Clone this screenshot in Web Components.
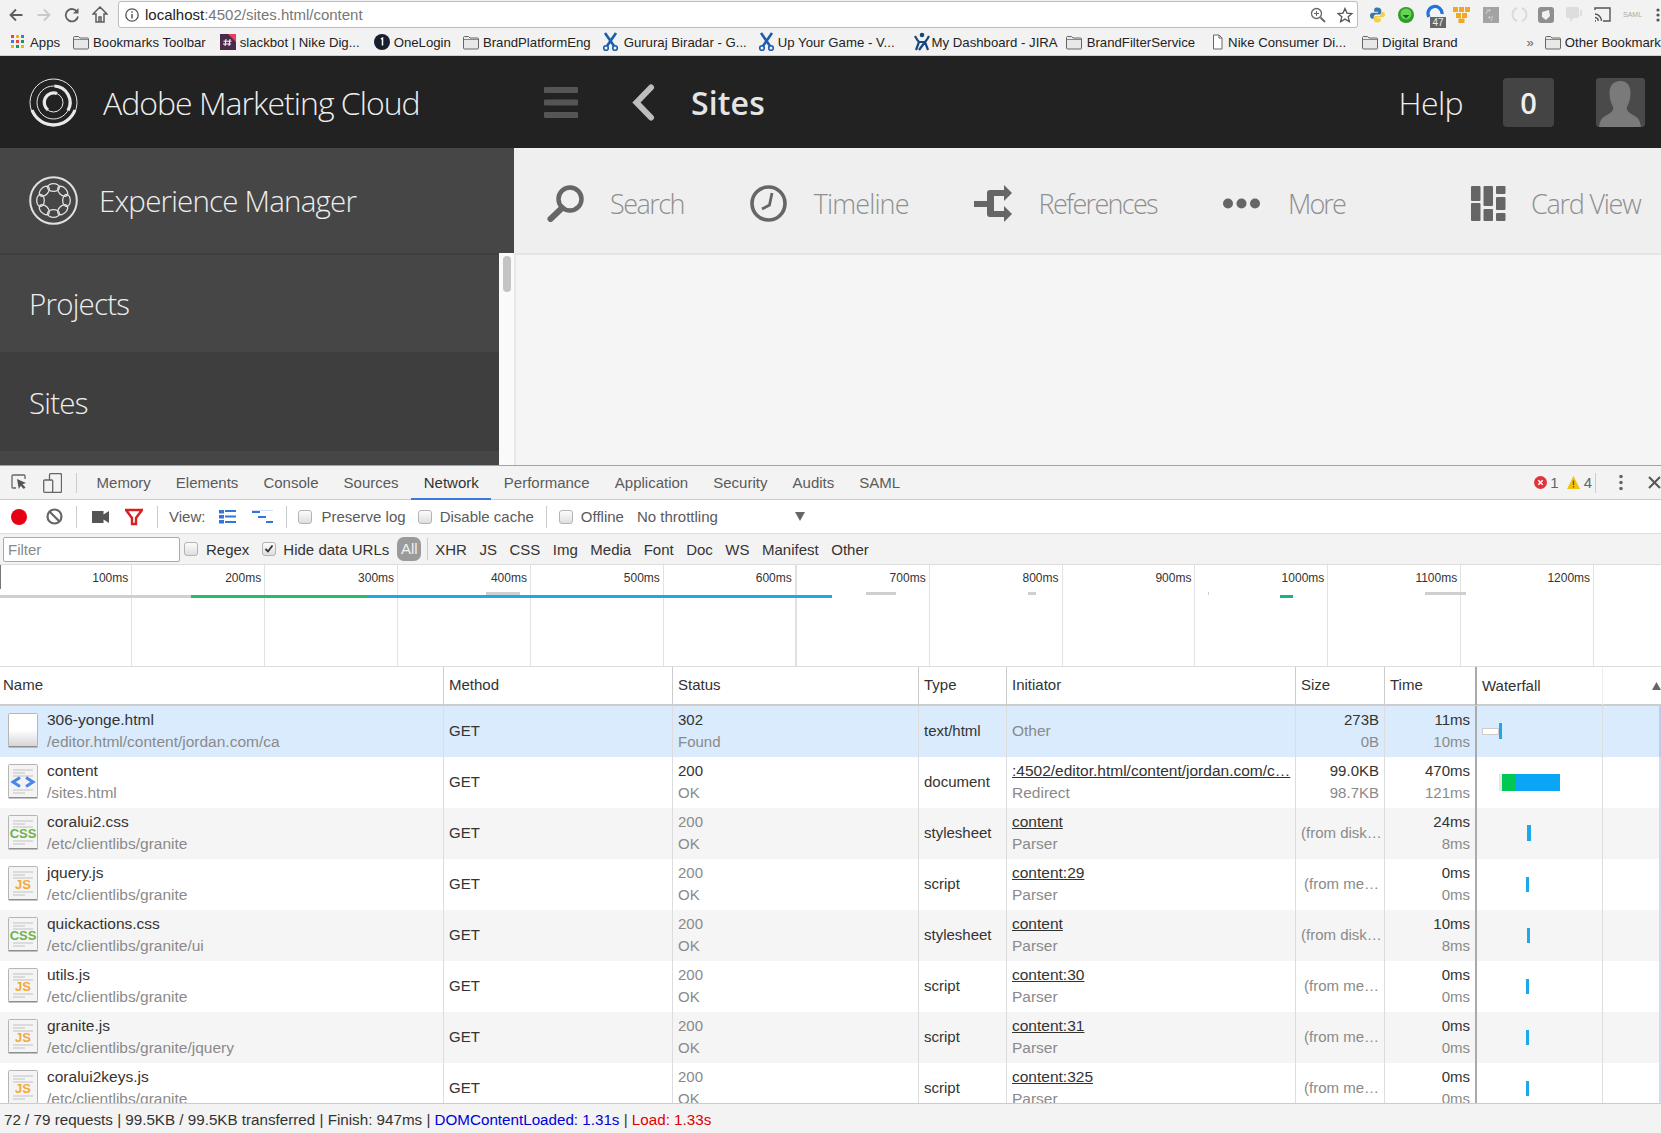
<!DOCTYPE html>
<html>
<head>
<meta charset="utf-8">
<title>Sites</title>
<style>
  html, body { margin: 0; height: 1133px; overflow: hidden; background: #fff; }
  body { font-family: "Liberation Sans", Arial, sans-serif; }
</style>
</head>
<body>
<browser-chrome></browser-chrome>
<aem-header></aem-header>
<aem-toolbar></aem-toolbar>
<aem-body></aem-body>
<dev-tools></dev-tools>

<script>
const define = (name, html) => {
  customElements.define(name, class extends HTMLElement {
    connectedCallback() {
      if (this.shadowRoot) return;
      this.attachShadow({ mode: 'open' });
      const elem = document.createElement('template');
      elem.innerHTML = typeof html === 'function' ? html(this) : html;
      this.shadowRoot.append(elem.content);
    }
  });
};

const folder = `<svg width="16" height="15" viewBox="0 0 16 15"><path d="M.5 2.500a1 1 0 0 1 1-1h4l1.500 1.500h7.500a1 1 0 0 1 1 1v9a1 1 0 0 1-1 1h-13a1 1 0 0 1-1-1z" fill="#e8e8e8" stroke="#666"/><path d="M1 4.500h14" stroke="#888"/></svg>`;
const scissors = c => `<svg width="17" height="20" viewBox="0 0 17 20"><path d="M3 1l9 13M14 1L5 14" stroke="${c}" stroke-width="2.600" fill="none"/><circle cx="4" cy="16" r="2.300" fill="none" stroke="${c}" stroke-width="1.600"/><circle cx="13" cy="16" r="2.300" fill="none" stroke="${c}" stroke-width="1.600"/></svg>`;

const bookmarks = [
  [11, `<svg width="14" height="14" viewBox="0 0 14 14"><g><rect width="3" height="3" fill="#e0483e"/><rect x="5" width="3" height="3" fill="#f4b400"/><rect x="10" width="3" height="3" fill="#3b78e7"/><rect y="5" width="3" height="3" fill="#3b78e7"/><rect x="5" y="5" width="3" height="3" fill="#e0483e"/><rect x="10" y="5" width="3" height="3" fill="#0f9d58"/><rect y="10" width="3" height="3" fill="#f4b400"/><rect x="5" y="10" width="3" height="3" fill="#0f9d58"/><rect x="10" y="10" width="3" height="3" fill="#f4b400"/></g></svg>`, 'Apps', 5],
  [13, folder, 'Bookmarks Toolbar', 4],
  [14, `<svg width="16" height="16" viewBox="0 0 16 16"><rect width="16" height="16" fill="#4a2a4d"/><path d="M8 0h8v8z" fill="#e9405b"/><path d="M6 5L5 12M10 5L9 12M3.500 7.200h8M3 10h8" stroke="#fff" stroke-width="1"/></svg>`, 'slackbot | Nike Dig...', 4],
  [14, `<svg width="16" height="16" viewBox="0 0 16 16"><circle cx="8" cy="8" r="8" fill="#16202e"/><path d="M7 5l1.500-.8V11.500" stroke="#fff" stroke-width="1.500" fill="none"/></svg>`, 'OneLogin', 4],
  [12, folder, 'BrandPlatformEng', 4],
  [11, scissors('#1d5dab'), 'Gururaj Biradar - G...', 5],
  [11, scissors('#1d5dab'), 'Up Your Game - V...', 3],
  [19, `<svg width="16" height="20" viewBox="0 0 16 20"><circle cx="8" cy="3" r="2.300" fill="#14487e"/><path d="M1 4c2 4 3 5 4 6L2 18M15 4c-2 4-3 5-4 6l3 8M5 10h6L5 18M11 10l-6 8" stroke="#14487e" stroke-width="2.200" fill="none"/></svg>`, 'My Dashboard - JIRA', 2],
  [8, folder, 'BrandFilterService', 5],
  [16, `<svg width="13" height="16" viewBox="0 0 13 16"><path d="M2.500 1h5.500l3 3v11h-8.500z" fill="#fff" stroke="#666"/><path d="M8 1v3h3" fill="none" stroke="#666"/></svg>`, 'Nike Consumer Di...', 4],
  [16, folder, 'Digital Brand', 4],
];

define('bm-item', `
  <style>
    :host { display: inline-flex; align-items: center; flex: none; height: 26px; font-size: 13.200px; color: #222; white-space: nowrap; }
    .ico { display: flex; margin-right: var(--ig, 4px); }
  </style>
  <span class="ico"><slot name="icon"></slot></span><slot></slot>
`);

define('browser-chrome', () => `
  <style>
    :host { display: block; height: 56px; background: #f2f2f2; box-sizing: border-box; border-bottom: 1px solid #d0d0d0; overflow: hidden; }
    .nav { display: flex; align-items: center; height: 29px; }
    .nav > svg { flex: none; }
    .url { flex: none; width: 1240px; height: 27px; margin-left: 10px; box-sizing: border-box; background: #fff; border: 1px solid #bcbcbc; border-radius: 3px;
           display: flex; align-items: center; padding: 0 4px 0 6px; font-size: 15px; color: #777; }
    .url b { font-weight: 400; color: #222; }
    .url span { flex: 1; margin-left: 6px; }
    .exts { display: flex; align-items: center; margin-left: 11px; }
    .exts > * { flex: none; }
    .bm { display: flex; align-items: center; height: 26px; }
  </style>
  <div class="nav">
    <svg style="margin-left:9px" width="14" height="14" viewBox="0 0 14 14"><path d="M13.500 7H2M7 1.500L1.500 7 7 12.500" fill="none" stroke="#5f5f5f" stroke-width="1.800"/></svg>
    <svg style="margin-left:14px" width="14" height="14" viewBox="0 0 14 14"><path d="M.5 7H12M7 1.500L12.500 7 7 12.500" fill="none" stroke="#c9c9c9" stroke-width="1.800"/></svg>
    <svg style="margin-left:13px" width="16" height="16" viewBox="0 0 16 16"><path d="M13.500 5.500A6.200 6.200 0 1 0 14 9.500" fill="none" stroke="#5f5f5f" stroke-width="1.800"/><path d="M14.500 1v5.500H9z" fill="#5f5f5f"/></svg>
    <svg style="margin-left:12px" width="16" height="17" viewBox="0 0 16 17"><path d="M8 1L1 8h3v8h8V8h3zM7 16v-5h2v5" fill="none" stroke="#5f5f5f" stroke-width="1.500"/></svg>
    <div class="url">
      <svg width="14" height="14" viewBox="0 0 14 14"><circle cx="7" cy="7" r="6.200" fill="none" stroke="#555" stroke-width="1.300"/><path d="M7 6v4.500M7 3.200v1.500" stroke="#555" stroke-width="1.500"/></svg>
      <span><b>localhost</b>:4502/sites.html/content</span>
      <svg width="16" height="16" viewBox="0 0 16 16"><circle cx="6.500" cy="6.500" r="5" fill="none" stroke="#666" stroke-width="1.300"/><path d="M10.500 10.500L15 15" stroke="#666" stroke-width="1.800"/><path d="M4 6.500h5M6.500 4v5" stroke="#666"/></svg>
      <svg style="margin-left:11px" width="16" height="16" viewBox="0 0 16 16"><path d="M8 1.500l2 4.600 5 .4-3.800 3.300 1.200 4.900L8 12.100l-4.400 2.600 1.200-4.900L1 6.500l5-.4z" fill="none" stroke="#555" stroke-width="1.300"/></svg>
    </div>
    <div class="exts">
      <svg width="17" height="18" viewBox="0 0 18 18"><path d="M9 1C5.500 1 5.500 2.500 5.500 4v1.500H9.500V6.500H3.500C2 6.500 1 8 1 9.500S2 13 3.500 13H5v-2c0-1.500 1-2.500 2.500-2.500h3.500c1.200 0 2-1 2-2V4c0-1.500-1.500-3-4-3z" fill="#3b77a8"/><path d="M9 17c3.500 0 3.500-1.500 3.500-3v-1.500H8.500v-1h6c1.500 0 2.500-1.500 2.500-3S16 5.500 14.500 5.500H13v2c0 1.500-1 2.500-2.500 2.500H7c-1.200 0-2 1-2 2v2c0 1.500 1.500 3 4 3z" fill="#f5cf45"/></svg>
      <svg style="margin-left:12px" width="16" height="16" viewBox="0 0 16 16"><circle cx="8" cy="8" r="8" fill="#2c9c2c"/><circle cx="8" cy="7" r="5.500" fill="#66d452"/><path d="M4.500 8h7L8 11.500z" fill="#0d6b17"/></svg>
      <span style="position:relative;display:flex;margin-left:12px;width:20px;height:26px;top:1px">
        <svg width="19" height="18" viewBox="0 0 19 18"><path d="M3 14A7 7 0 1 1 16 11" fill="none" stroke="#2274dc" stroke-width="3.300"/></svg>
        <span style="position:absolute;left:4px;top:14px;width:16px;height:11px;background:#666;color:#eee;font-size:10px;line-height:11px;text-align:center">47</span>
      </span>
      <svg style="margin-left:7px" width="17" height="16" viewBox="0 0 17 16" fill="#f5a623"><rect width="5" height="5"/><rect x="6" width="5" height="5"/><rect x="12" width="5" height="5"/><path d="M3 6h5v5H3zM9 6h5v5H9zM5.500 11.500h6v4.500h-6z"/></svg>
      <span style="display:flex;margin-left:13px;width:16px;height:16px;background:#a3a3a3;color:#e4e4e4;font-size:7px;line-height:7px;padding:1px 0 0 3px;box-sizing:border-box;white-space:pre">/*
 */</span>
      <svg style="margin-left:12px" width="17" height="17" viewBox="0 0 17 17"><path d="M6 2a7 7 0 0 0 0 13M11 2a7 7 0 0 1 0 13" fill="none" stroke="#dbdbdb" stroke-width="2"/></svg>
      <svg style="margin-left:10px" width="16" height="16" viewBox="0 0 16 16"><rect width="16" height="16" rx="3" fill="#8f8f8f"/><path d="M4 5l7-2 1 6-4 4-4-3z" fill="#f1f1f1"/></svg>
      <svg style="margin-left:12px" width="16" height="15" viewBox="0 0 16 15"><rect width="13" height="11" rx="2" fill="#ddd"/><path d="M4 11v4l4-4zM14 3h2v6h-2z" fill="#ddd"/></svg>
      <svg style="margin-left:12px" width="17" height="15" viewBox="0 0 17 15"><path d="M1 3V1h15v13H9M1 7a7 7 0 0 1 6.500 7M1 10.500a3.500 3.500 0 0 1 3.200 3.500M1 14h1" fill="none" stroke="#555" stroke-width="1.400"/></svg>
      <span style="margin-left:12px;font-size:7px;color:#aaa;width:15px">SAML</span>
      <svg style="margin-left:18px" width="4" height="14" viewBox="0 0 4 14"><circle cx="2" cy="2" r="1.600" fill="#555"/><circle cx="2" cy="7" r="1.600" fill="#555"/><circle cx="2" cy="12" r="1.600" fill="#555"/></svg>
    </div>
  </div>
  <div class="bm">
    ${bookmarks.map(([m, ico, label, ig]) => `<bm-item style="margin-left:${m}px;--ig:${ig}px"><span slot="icon" style="display:flex">${ico}</span>${label}</bm-item>`).join('')}
    <span style="margin-left:69px;font-size:13px;color:#666">»</span>
    <bm-item style="margin-left:11px;--ig:4px"><span slot="icon" style="display:flex">${folder}</span>Other Bookmarks</bm-item>
  </div>
`);

const aemFont = `"Open Sans", "Noto Sans", sans-serif`;

define('aem-header', `
  <style>
    :host { display: flex; align-items: center; height: 92px; background: #222; color: #eee; font-family: ${aemFont}; overflow: hidden; }
    .logo { flex: none; margin-left: 29px; display: flex; }
    .name { flex: none; width: 396px; margin-left: 25px; font-size: 32px; font-weight: 300; letter-spacing: -1px; white-space: nowrap; }
    .burger { flex: none; margin-left: 45px; display: flex; }
    .back { flex: none; margin-left: 54px; display: flex; }
    .page { flex: 1; margin-left: 36px; font-size: 32px; font-weight: 600; letter-spacing: .15px; color: #e4e4e4; }
    .help { flex: none; font-size: 32px; font-weight: 300; letter-spacing: -.6px; }
    .count { flex: none; width: 51px; height: 49px; margin-left: 40px; border-radius: 4px; background: #444; display: flex; align-items: center; justify-content: center; font-size: 29px; font-weight: 600; }
    .avatar { flex: none; width: 49px; height: 49px; margin: 0 16px 0 42px; display: flex; }
  </style>
  <span class="logo"><svg width="49" height="49" viewBox="0 0 49 49" fill="none" stroke="#e8e8e8">
    <circle cx="24.500" cy="24.500" r="23.500" stroke-width="1"/>
    <path d="M3 32A23 23 0 0 0 46 32" stroke-width="3.200"/>
    <circle cx="24.500" cy="24.500" r="16.500" stroke-width="1"/>
    <path d="M25.500 8A16.500 16.500 0 0 1 39 32.500" stroke-width="3.200"/>
    <circle cx="24.500" cy="24.500" r="9.500" stroke-width="1"/>
    <path d="M28 15.500A9.500 9.500 0 0 0 19 32" stroke-width="3.200"/>
  </svg></span>
  <span class="name">Adobe Marketing Cloud</span>
  <span class="burger"><svg width="34" height="31" viewBox="0 0 34 31"><rect width="34" height="6" rx="1" fill="#555"/><rect y="12.500" width="34" height="6" rx="1" fill="#555"/><rect y="25" width="34" height="6" rx="1" fill="#555"/></svg></span>
  <span class="back"><svg width="23" height="37" viewBox="0 0 23 37"><path d="M19 3.500L4.500 18.500 19 33.500" fill="none" stroke="#bdbdbd" stroke-width="6" stroke-linecap="round"/></svg></span>
  <span class="page">Sites</span>
  <span class="help">Help</span>
  <span class="count">0</span>
  <span class="avatar"><svg width="49" height="49" viewBox="0 0 49 49"><rect width="49" height="49" rx="3" fill="#4a4a4a"/><path d="M24.500 3c7 0 10 5 10 12 0 5-1.500 10-3.500 14-1 3 1 5 6 8 5 2.500 7 5 8 12H3c1-7 3-9.500 8-12 5-3 7-5 6-8-2-4-3.500-9-3.500-14 0-7 3.500-12 11-12z" fill="#7a7a7a"/></svg></span>
`);

define('aem-action', `
  <style>
    :host { display: flex; align-items: center; flex: none; color: #8f8f8f; font-size: 27px; font-weight: 300; letter-spacing: var(--ls, -1px); white-space: nowrap; }
    .i { display: flex; margin-right: var(--g, 27px); }
  </style>
  <span class="i"><slot name="icon"></slot></span><slot></slot>
`);

define('aem-toolbar', () => `
  <style>
    :host { display: flex; height: 105px; font-family: ${aemFont}; }
    .brand { flex: none; width: 514px; background: #464646; color: #eee; display: flex; align-items: center; font-size: 29.500px; font-weight: 300; letter-spacing: -.8px; }
    .brand svg { margin: 0 21px 0 29px; }
    .actions { flex: 1; background: #efefef; display: flex; align-items: center; padding: 6px 0 0 33px; }
  </style>
  <div class="brand">
    <svg width="49" height="49" viewBox="0 0 49 49" fill="none" stroke="#e0e0e0">
      <circle cx="24.500" cy="24.500" r="23.300" stroke-width="2"/>
      <g stroke-width="1.300">
        ${[0, 45, 90, 135, 180, 225, 270, 315].map(a => `<ellipse cx="24.500" cy="11.500" rx="6" ry="3.800" transform="rotate(${a} 24.500 24.500)"/>`).join('')}
      </g>
    </svg>
    Experience Manager
  </div>
  <div class="actions">
    <aem-action style="--ls:-1.550px;--g:26px"><svg slot="icon" width="37" height="37" viewBox="0 0 37 37"><circle cx="23" cy="14" r="11.500" fill="none" stroke="#666" stroke-width="4.500"/><path d="M15 23L3.500 34" stroke="#666" stroke-width="6" stroke-linecap="round"/></svg>Search</aem-action>
    <aem-action style="margin-left:66px;--ls:-.9px"><svg slot="icon" width="37" height="37" viewBox="0 0 37 37"><circle cx="18.500" cy="18.500" r="16.500" fill="none" stroke="#666" stroke-width="3.600"/><path d="M22 8l-2.500 12-7.500 4" fill="none" stroke="#666" stroke-width="2.800"/></svg>Timeline</aem-action>
    <aem-action style="margin-left:65px;--ls:-1.700px"><svg slot="icon" width="38" height="37" viewBox="0 0 38 37"><path d="M0 16h13V8a3 3 0 0 1 3-3h14V0l8 8-8 8v-5H20v15h10v-5l8 8-8 8v-5H16a3 3 0 0 1-3-3V22H0z" fill="#666"/></svg>References</aem-action>
    <aem-action style="margin-left:66px;--g:28px;--ls:-1.850px"><svg slot="icon" width="37" height="11" viewBox="0 0 37 11"><circle cx="5" cy="5.500" r="5" fill="#666"/><circle cx="18.500" cy="5.500" r="5" fill="#666"/><circle cx="32" cy="5.500" r="5" fill="#666"/></svg>More</aem-action>
    <aem-action style="margin-left:126px;--g:25px;--ls:-1.250px"><svg slot="icon" width="35" height="35" viewBox="0 0 35 35" fill="#666"><rect width="9.500" height="15" rx="1"/><rect x="12.500" width="9.500" height="20" rx="1"/><rect x="25" width="9.500" height="8" rx="1"/><rect y="17" width="9.500" height="18" rx="1"/><rect x="12.500" y="23" width="9.500" height="12" rx="1"/><rect x="25" y="11" width="9.500" height="13" rx="1"/><rect x="25" y="27" width="9.500" height="8" rx="1"/></svg>Card View</aem-action>
  </div>
`);

define('aem-nav-item', `
  <style>
    :host { display: flex; align-items: center; box-sizing: border-box; height: 99px; padding-left: 29px; background: var(--bg, #464646); color: #eee; font-size: 29.500px; font-weight: 300; letter-spacing: -.8px; }
  </style>
  <slot></slot>
`);

define('aem-body', `
  <style>
    :host { display: flex; height: 212px; font-family: ${aemFont}; overflow: hidden; }
    nav { flex: none; width: 499px; background: #464646; border-top: 2px solid #3f3f3f; box-sizing: border-box; }
    .track { flex: none; width: 15px; background: #fafafa; padding-top: 3px; box-sizing: border-box; display: flex; justify-content: center; }
    .thumb { width: 8px; height: 36px; border-radius: 4px; background: #c4c4c4; }
    .pane { flex: 1; background: #f5f5f5; border-left: 2px solid #e8e8e8; border-top: 2px solid #e4e4e4; }
  </style>
  <nav>
    <aem-nav-item style="height:97px">Projects</aem-nav-item>
    <aem-nav-item style="--bg:#3e3e3e;padding-top:2px">Sites</aem-nav-item>
  </nav>
  <div class="track"><div class="thumb"></div></div>
  <div class="pane"></div>
`);

define('dt-tab', `
  <style>
    :host { display: flex; align-items: center; padding: 0 12.550px; height: 34px; box-sizing: border-box; color: #5a5a5a; white-space: nowrap; }
    :host([active]) { color: #333; border-bottom: 2px solid #3879d9; padding-top: 2px; }
  </style>
  <slot></slot>
`);

define('dt-check', `
  <style>
    :host { display: inline-flex; align-items: center; flex: none; white-space: nowrap; color: var(--c, #5a5a5a); }
    .box { flex: none; width: 14px; height: 14px; box-sizing: border-box; border: 1px solid #b4b4b4; border-radius: 3px; background: linear-gradient(#fcfcfc, #dedede); margin-right: var(--g, 9px); display: flex; }
    svg { display: none; }
    :host([checked]) svg { display: block; }
  </style>
  <span class="box"><svg width="12" height="12" viewBox="0 0 12 12"><path d="M2.500 6l2.500 2.500L9.500 2.500" fill="none" stroke="#333" stroke-width="1.800"/></svg></span><slot></slot>
`);

const sep = m => `<i style="flex:none;width:1px;height:22px;background:#ccc;margin-left:${m}px"></i>`;

define('dt-tabs', `
  <style>
    :host { display: flex; align-items: center; height: 35px; box-sizing: border-box; background: #f3f3f3; border-top: 1px solid #a3a3a3; border-bottom: 1px solid #ccc; }
    svg { flex: none; }
    .status { margin-left: auto; display: flex; align-items: center; color: #666; font-size: 15px; }
  </style>
  <svg style="margin-left:11px" width="17" height="17" viewBox="0 0 17 17"><path d="M5 14H2a1 1 0 0 1-1-1V2a1 1 0 0 1 1-1h11a1 1 0 0 1 1 1v3" fill="none" stroke="#666" stroke-width="1.300"/><path d="M6 5l9 4-3.500 1.200 3 3.300-1.800 1.500-3-3.300L7.800 15z" fill="#555"/></svg>
  <svg style="margin-left:15px" width="19" height="20" viewBox="0 0 19 20"><rect x="6.500" y=".7" width="12" height="18.600" rx="1" fill="none" stroke="#666" stroke-width="1.300"/><rect x=".7" y="7" width="9" height="12.300" rx="1" fill="#f3f3f3" stroke="#666" stroke-width="1.300"/></svg>
  <i style="flex:none;width:1px;height:20px;background:#ccc;margin:0 7px 0 14px"></i>
  <dt-tab>Memory</dt-tab><dt-tab>Elements</dt-tab><dt-tab>Console</dt-tab><dt-tab>Sources</dt-tab><dt-tab active>Network</dt-tab><dt-tab>Performance</dt-tab><dt-tab>Application</dt-tab><dt-tab>Security</dt-tab><dt-tab>Audits</dt-tab><dt-tab>SAML</dt-tab>
  <div class="status">
    <svg width="13" height="13" viewBox="0 0 13 13"><circle cx="6.500" cy="6.500" r="6.500" fill="#e0333c"/><path d="M4.300 4.300l4.400 4.400M8.700 4.300l-4.400 4.400" stroke="#fff" stroke-width="1.500"/></svg>
    <span style="margin:0 8px 0 3px">1</span>
    <svg width="13" height="13" viewBox="0 0 13 13"><path d="M6.500 0L13 13H0z" fill="#f4c20d"/><path d="M6.500 4.500v4.500M6.500 10v1.500" stroke="#6b5200" stroke-width="1.300"/></svg>
    <span style="margin:0 3px 0 4px">4</span>
    <i style="width:1px;height:20px;background:#ccc"></i>
    <svg style="margin-left:23px" width="4" height="17" viewBox="0 0 4 17"><circle cx="2" cy="2.500" r="1.800" fill="#666"/><circle cx="2" cy="8.500" r="1.800" fill="#666"/><circle cx="2" cy="14.500" r="1.800" fill="#666"/></svg>
    <svg style="margin:0 0 0 25px" width="13" height="13" viewBox="0 0 13 13"><path d="M1 1l11 11M12 1L1 12" stroke="#555" stroke-width="2"/></svg>
  </div>
`);

define('dt-toolbar', `
  <style>
    :host { display: flex; align-items: center; height: 34px; box-sizing: border-box; background: #fff; border-bottom: 1px solid #ddd; color: #5a5a5a; white-space: nowrap; }
    svg { flex: none; }
  </style>
  <svg style="margin-left:11px" width="16" height="16" viewBox="0 0 16 16"><circle cx="8" cy="8" r="8" fill="#e60012"/></svg>
  <svg style="margin-left:19px" width="17" height="17" viewBox="0 0 17 17"><circle cx="8.500" cy="8.500" r="7" fill="none" stroke="#666" stroke-width="2.200"/><path d="M3.500 3.500l10 10" stroke="#666" stroke-width="2.200"/></svg>
  ${sep(13)}
  <svg style="margin-left:15px" width="17" height="12" viewBox="0 0 17 12"><path d="M0 0h11.500v12H0zM11.500 3.500l5.500-3.500v12l-5.500-3.500z" fill="#555"/></svg>
  <svg style="margin-left:16px" width="18" height="18" viewBox="0 0 18 18"><path d="M1 2h16l-6 8v6H7v-6z" fill="none" stroke="#d92020" stroke-width="2.400"/></svg>
  ${sep(14)}
  <span style="margin-left:11px">View:</span>
  <svg style="margin-left:14px" width="17" height="14" viewBox="0 0 17 14" fill="#3575d8"><rect width="5" height="3.500"/><rect x="6" width="11" height="2"/><rect y="5" width="5" height="3.500"/><rect x="6" y="5.500" width="11" height="2"/><rect y="10" width="5" height="3.500"/><rect x="6" y="11" width="11" height="2"/></svg>
  <svg style="margin-left:16px" width="21" height="14" viewBox="0 0 21 14"><rect width="21" height="1" fill="#cfe0f8"/><rect y="1" width="8" height="2" fill="#3575d8"/><rect x="6" y="6" width="8" height="2" fill="#3575d8"/><rect x="14" y="11" width="7" height="2" fill="#3575d8"/></svg>
  ${sep(13)}
  <dt-check style="margin-left:11px">Preserve log</dt-check>
  <dt-check style="margin-left:12px;--g:8px">Disable cache</dt-check>
  ${sep(12)}
  <dt-check style="margin-left:12px;--g:8px">Offline</dt-check>
  <span style="margin-left:13px;width:158px">No throttling</span>
  <svg width="10" height="9" viewBox="0 0 10 9"><path d="M0 0h10L5 9z" fill="#666"/></svg>
`);

define('dt-filterbar', `
  <style>
    :host { display: flex; align-items: center; height: 31px; box-sizing: border-box; background: #f3f3f3; border-bottom: 1px solid #ddd; color: #333; white-space: nowrap; }
    .input { flex: none; margin-left: 3px; width: 177px; height: 25px; box-sizing: border-box; background: #fff; border: 1px solid #aaa; border-radius: 2px; padding-left: 4px; line-height: 24px; color: #8a8a8a; }
    .all { flex: none; margin-left: 8px; width: 24px; height: 24px; border-radius: 7px; background: #9a9a9a; color: #f2f2f2; text-align: center; line-height: 24px; }
    .types { display: flex; gap: 12.500px; margin-left: 7px; }
  </style>
  <div class="input">Filter</div>
  <dt-check style="margin-left:4px;--g:8px;--c:#333">Regex</dt-check>
  <dt-check checked style="margin-left:13px;--g:7px;--c:#333">Hide data URLs</dt-check>
  <span class="all">All</span>
  <i style="flex:none;width:1px;height:22px;background:#ccc;margin-left:6px"></i>
  <div class="types"><span>XHR</span><span>JS</span><span>CSS</span><span>Img</span><span>Media</span><span>Font</span><span>Doc</span><span>WS</span><span>Manifest</span><span>Other</span></div>
`);

const marks = ['100ms','200ms','300ms','400ms','500ms','600ms','700ms','800ms','900ms','1000ms','1100ms','1200ms','',''];
define('dt-overview', `
  <style>
    :host { display: block; position: relative; height: 101px; background: #fff; overflow: hidden; border-bottom: 1px solid #ddd; }
    .ticks { display: flex; height: 100%; }
    .tick { flex: none; width: 132.900px; box-sizing: border-box; border-right: 1px solid #e2e2e2; text-align: right; padding: 6px 3px 0 0; font-size: 12px; line-height: 14px; color: #333; }
    .tick:first-child { width: 132.300px; }
    .tick.hard { border-right: 2px solid #e0e0e0; }
    .bar { position: absolute; height: 3px; top: 30px; }
    .dash { position: absolute; height: 3px; top: 27px; background: #cfcfcf; }
    .start { position: absolute; left: 0; top: 0; width: 1px; height: 24px; background: #777; }
  </style>
  <div class="ticks">${marks.map((m, i) => `<div class="tick${i === 5 ? ' hard' : ''}">${m}</div>`).join('')}</div>
  <i class="start"></i>
  <i class="bar" style="left:0;width:191px;background:#cfcfcf"></i>
  <i class="bar" style="left:191px;width:176px;background:#1fc06b"></i>
  <i class="bar" style="left:367px;width:465px;background:#1ba9e8"></i>
  <i class="bar" style="left:1280px;width:13px;background:#16b878"></i>
  <i class="dash" style="left:486px;width:34px"></i>
  <i class="dash" style="left:866px;width:30px"></i>
  <i class="dash" style="left:1028px;width:8px"></i>
  <i class="dash" style="left:1208px;width:1px"></i>
  <i class="dash" style="left:1425px;width:41px"></i>
`);

const cols = '444px 229px 246px 88px 289px 89px 92px 126px 58px';

const fileIcon = kind => {
  const lines = [6, 9, 12, 26, 29].map(y => `<path d="M5 ${y}h${y % 2 ? 12 : 20}" stroke="#c2c2c2"/>`).join('');
  const label = {
    css: `<text x="15" y="23" text-anchor="middle" font-family="Liberation Sans" font-weight="700" font-size="13" fill="#6db34a">CSS</text>`,
    js: `<text x="15" y="23" text-anchor="middle" font-family="Liberation Sans" font-weight="700" font-size="13" fill="#f2a93b">JS</text>`,
    doc: `<path d="M12 13.500L5 18l7 4.500M18 13.500L25 18l-7 4.500" fill="none" stroke="#4a86e8" stroke-width="3"/>`,
    blank: '',
  }[kind];
  const fill = kind === 'blank' ? 'url(#blank)' : '#f4f4f4';
  return `<svg width="30" height="35" viewBox="0 0 30 35">
    <defs><linearGradient id="blank" x1="0" y1="0" x2="0" y2="1"><stop offset=".5" stop-color="#fff"/><stop offset="1" stop-color="#d4d4d4"/></linearGradient></defs>
    <rect x=".5" y=".5" width="29" height="33" rx="1" fill="${fill}" stroke="#b5b5b5"/>
    <path d="M.5 33.800h29" stroke="#8a8a8a" stroke-width="1.400"/>
    ${kind === 'blank' ? '' : lines}${label}
  </svg>`;
};

define('net-row', `
  <style>
    :host { display: grid; grid-template-columns: ${cols}; height: 51px; background: var(--bg, #fff); color: #333; font-size: 15.500px; }
    .c { border-right: 1px solid #ddd; box-sizing: border-box; min-width: 0; display: flex; flex-direction: column; justify-content: center; padding: 0 5px 2px; white-space: nowrap; overflow: hidden; line-height: 22px; }
    .plain { font-size: 15px; }
    .name { flex-direction: row; justify-content: flex-start; align-items: center; padding: 0 0 2px 8px; }
    .name > div { margin-left: 9px; }
    .r { text-align: right; }
    .time { border-right: 2px solid #aaa; }
    .fall { position: relative; overflow: visible; }
    .end { border-right: 2px solid var(--edge, transparent); }
    ::slotted([slot=fall]) { position: absolute; }
    ::slotted(.dim), .dim { color: #8a8a8a; }
    ::slotted(a) { color: #333; text-decoration: underline; }
  </style>
  <div class="c name"><slot name="icon"></slot><div><div><slot name="n1"></slot></div><div class="dim"><slot name="n2"></slot></div></div></div>
  <div class="c plain"><slot name="method"></slot></div>
  <div class="c plain"><slot name="status"></slot></div>
  <div class="c plain"><slot name="type"></slot></div>
  <div class="c"><slot name="init"></slot></div>
  <div class="c r plain"><slot name="size"></slot></div>
  <div class="c r time plain"><slot name="time"></slot></div>
  <div class="c fall"><slot name="fall"></slot></div>
  <div class="end"></div>
`);

const rows = [
  ['blank','306-yonge.html','/editor.html/content/jordan.com/ca',['302','Found',1],'text/html',null,'Other',['273B','0B'],['11ms','10ms'],[[6,22,17,7,'#fff','1px solid #ccc'],[23,17,3,16,'#1ba9e8']]],
  ['doc','content','/sites.html',['200','OK',1],'document',':4502/editor.html/content/jordan.com/c…','Redirect',['99.0KB','98.7KB'],['470ms','121ms'],[[23,17,3,17,'#e6e6e6'],[26,17,13,17,'#00c853'],[39,17,45,17,'#0aa5f5']]],
  ['css','coralui2.css','/etc/clientlibs/granite',['200','OK',0],'stylesheet','content','Parser','(from disk…',['24ms','8ms'],[[51,17,4,16,'#1ba9e8']]],
  ['js','jquery.js','/etc/clientlibs/granite',['200','OK',0],'script','content:29','Parser','(from me…',['0ms','0ms'],[[50,18,3,15,'#1ba9e8']]],
  ['css','quickactions.css','/etc/clientlibs/granite/ui',['200','OK',0],'stylesheet','content','Parser','(from disk…',['10ms','8ms'],[[51,18,3,15,'#1ba9e8']]],
  ['js','utils.js','/etc/clientlibs/granite',['200','OK',0],'script','content:30','Parser','(from me…',['0ms','0ms'],[[50,18,3,15,'#1ba9e8']]],
  ['js','granite.js','/etc/clientlibs/granite/jquery',['200','OK',0],'script','content:31','Parser','(from me…',['0ms','0ms'],[[50,18,3,15,'#1ba9e8']]],
  ['js','coralui2keys.js','/etc/clientlibs/granite',['200','OK',0],'script','content:325','Parser','(from me…',['0ms','0ms'],[[50,18,3,15,'#1ba9e8']]],
];

const two = (slot, a, b, first) => `<span slot="${slot}" style="display:block;${first ? '' : 'color:#8a8a8a'}">${a}</span><span slot="${slot}" style="display:block;color:#8a8a8a">${b}</span>`;

define('net-table', () => `
  <style>
    :host { display: block; height: 436px; overflow: hidden; background: #fff; }
    .head { display: grid; grid-template-columns: ${cols}; height: 39px; border-bottom: 2px solid #ccc; box-sizing: border-box; color: #333; }
    .head span { border-right: 1px solid #ccc; padding-left: 5px; line-height: 36px; box-sizing: border-box; }
    .head span:first-child { padding-left: 3px; }
    .head span.t { border-right: 2px solid #aaa; }
    .head span.w { border-right: 1px solid #eee; line-height: 38px; }
    .head span.s { border: 0; padding: 0; display: flex; justify-content: flex-end; align-items: center; }
  </style>
  <div class="head">
    <span>Name</span><span>Method</span><span>Status</span><span>Type</span><span>Initiator</span><span>Size</span><span class="t">Time</span><span class="w">Waterfall</span>
    <span class="s"><svg width="9" height="8" viewBox="0 0 9 8"><path d="M4.500 0L9 8H0z" fill="#666"/></svg></span>
  </div>
  ${rows.map((r, i) => {
    const [icon, n1, n2, st, type, link, cause, size, time, bars] = r;
    const bg = i === 0 ? '#d9ebfd' : (i % 2 === 0 ? '#f5f5f5' : '#fff');
    const init = link ? `<a slot="init" style="display:block">${link}</a><span slot="init" class="dim" style="display:block">${cause}</span>` : `<span slot="init" class="dim">${cause}</span>`;
    const sz = Array.isArray(size) ? two('size', size[0], size[1], true) : `<span slot="size" class="dim">${size}</span>`;
    return `<net-row style="--bg:${bg};--edge:${i === 0 ? '#c8c8ef' : '#d8d8f4'}">
      <span slot="icon" style="display:flex;flex:none">${fileIcon(icon)}</span>
      <span slot="n1">${n1}</span><span slot="n2">${n2}</span>
      <span slot="method">GET</span>
      ${two('status', st[0], st[1], st[2])}
      <span slot="type">${type}</span>
      ${init}${sz}
      ${two('time', time[0], time[1], true)}
      ${bars.map(b => `<i slot="fall" style="left:${b[0] - 1}px;top:${b[1]}px;width:${b[2]}px;height:${b[3]}px;background:${b[4]};box-sizing:border-box;${b[5] ? 'border:' + b[5] : ''}"></i>`).join('')}
    </net-row>`;
  }).join('')}
`);

define('dt-status', `
  <style>
    :host { display: flex; align-items: center; height: 32px; box-sizing: border-box; padding-left: 4px; background: #f3f3f3; border-top: 1px solid #ccc; color: #333; font-size: 15.200px; white-space: pre; }
    .b { color: #0000d8; } .r { color: #e00000; }
  </style>
  <span>72 / 79 requests | 99.5KB / 99.5KB transferred | Finish: 947ms | </span><span class="b">DOMContentLoaded: 1.31s</span><span> | </span><span class="r">Load: 1.33s</span>
`);

define('dev-tools', `
  <style>
    :host { display: block; font-size: 15px; }
  </style>
  <dt-tabs></dt-tabs>
  <dt-toolbar></dt-toolbar>
  <dt-filterbar></dt-filterbar>
  <dt-overview></dt-overview>
  <net-table></net-table>
  <dt-status></dt-status>
`);
</script>
</body>
</html>
